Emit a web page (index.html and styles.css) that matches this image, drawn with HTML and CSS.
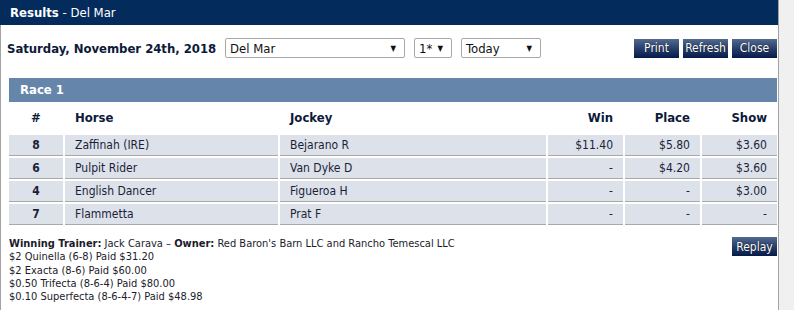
FILE: index.html
```html
<!DOCTYPE html>
<html lang="en">
<head>
	<meta charset="UTF-8">
	<title>Results - Del Mar</title>
	<link rel="stylesheet" href="styles.css">
</head>
<body>
	<div class="window">
		<div class="titlebar"><b>Results</b> - Del Mar</div>
		<div class="content">
			<div class="toolbar">
				<span class="date">Saturday, November 24th, 2018</span>
				<div class="select track"><span>Del Mar</span><span class="arrow">&#9660;</span></div>
				<div class="select race-no"><span>1*</span><span class="arrow">&#9660;</span></div>
				<div class="select day"><span>Today</span><span class="arrow">&#9660;</span></div>
				<div class="buttons">
					<button class="btn">Print</button>
					<button class="btn">Refresh</button>
					<button class="btn">Close</button>
				</div>
			</div>

			<div class="race">
				<div class="race-title">Race 1</div>
				<table class="results">
					<tr>
						<th class="num">#</th>
						<th class="name">Horse</th>
						<th class="name">Jockey</th>
						<th class="money">Win</th>
						<th class="money">Place</th>
						<th class="money">Show</th>
					</tr>
					<tr>
						<td class="num">8</td>
						<td class="name">Zaffinah (IRE)</td>
						<td class="name">Bejarano R</td>
						<td class="money">$11.40</td>
						<td class="money">$5.80</td>
						<td class="money">$3.60</td>
					</tr>
					<tr>
						<td class="num">6</td>
						<td class="name">Pulpit Rider</td>
						<td class="name">Van Dyke D</td>
						<td class="money">-</td>
						<td class="money">$4.20</td>
						<td class="money">$3.60</td>
					</tr>
					<tr>
						<td class="num">4</td>
						<td class="name">English Dancer</td>
						<td class="name">Figueroa H</td>
						<td class="money">-</td>
						<td class="money">-</td>
						<td class="money">$3.00</td>
					</tr>
					<tr>
						<td class="num">7</td>
						<td class="name">Flammetta</td>
						<td class="name">Prat F</td>
						<td class="money">-</td>
						<td class="money">-</td>
						<td class="money">-</td>
					</tr>
				</table>
			</div>

			<div class="footer">
				<div class="payouts">
					<div><b>Winning Trainer:</b> Jack Carava &ndash; <b>Owner:</b> Red Baron's Barn LLC and Rancho Temescal LLC</div>
					<div>$2 Quinella (6-8) Paid $31.20</div>
					<div>$2 Exacta (8-6) Paid $60.00</div>
					<div>$0.50 Trifecta (8-6-4) Paid $80.00</div>
					<div>$0.10 Superfecta (8-6-4-7) Paid $48.98</div>
				</div>
				<button class="btn">Replay</button>
			</div>
		</div>
	</div>
</body>
</html>
```

FILE: styles.css
```css
*{
	margin: 0;
	padding: 0;
	box-sizing: border-box;
}
body{
	background: #f0f0f0;
	font-family: "DejaVu Sans Condensed", "DejaVu Sans", sans-serif;
	color: #1b1b2b;
}
.window{
	width: 779px;
	height: 310px;
	background: #fff;
	border-right: 1px solid #a3a3a3;
	display: flex;
	flex-direction: column;
}
.titlebar{
	height: 25px;
	line-height: 25px;
	padding-left: 10px;
	background: #032b5c;
	color: #fff;
	font-size: 13px;
}
.content{
	flex: 1;
	border-left: 1px solid #a3a3a3;
}
.toolbar{
	display: flex;
	align-items: center;
	gap: 9px;
	height: 20px;
	margin-top: 13px;
	padding: 0 1px 0 6px;
}
.date{
	font-size: 13px;
	font-weight: bold;
	color: #0d1a3a;
	letter-spacing: -0.03px;
}
.select{
	height: 20px;
	border: 1px solid #a9a9a9;
	border-radius: 2px;
	display: flex;
	align-items: center;
	justify-content: space-between;
	padding: 0 8px 0 4px;
	font-size: 13px;
	color: #111;
}
.select .arrow{
	font-size: 8px;
	color: #111;
}
.track{
	width: 180px;
}
.race-no{
	width: 38px;
}
.day{
	width: 80px;
}
.buttons{
	margin-left: auto;
	display: flex;
	gap: 4px;
}
.btn{
	width: 45px;
	height: 19px;
	border: none;
	background: linear-gradient(#53698f, #273f6b 50%, #061a4a);
	color: #fff;
	font-family: "DejaVu Sans Condensed", "DejaVu Sans", sans-serif;
	font-size: 12px;
	text-shadow: 0 0 1px #000;
}
.race{
	margin: 20px 1px 0 8px;
}
.race-title{
	height: 24px;
	line-height: 24px;
	padding-left: 11px;
	background: #6585aa;
	color: #fff;
	font-size: 13px;
	font-weight: bold;
}
.results{
	width: calc(100% + 4px);
	margin: -2px -2px 0;
	border-collapse: separate;
	border-spacing: 2px;
	font-size: 12px;
}
.results th{
	height: 31px;
	font-size: 13px;
	color: #0d1a3a;
}
.results td{
	height: 21px;
	background: #dde1ea;
	border-bottom: 1px solid #a9a9a9;
	color: #1a1f38;
}
.results .num{
	width: 54px;
	text-align: center;
	font-weight: bold;
}
.results .name{
	text-align: left;
	padding-left: 10px;
}
.results th.name:nth-child(2){
	width: 213px;
}
.results .money{
	width: 75px;
	text-align: right;
	padding-right: 10px;
}
.results th.money{
	padding-right: 10px;
}
.footer{
	display: flex;
	justify-content: space-between;
	align-items: flex-start;
	margin: 10px 1px 0 8px;
}
.payouts{
	font-size: 11px;
	line-height: 13.3px;
	color: #1b1b2b;
}
```
